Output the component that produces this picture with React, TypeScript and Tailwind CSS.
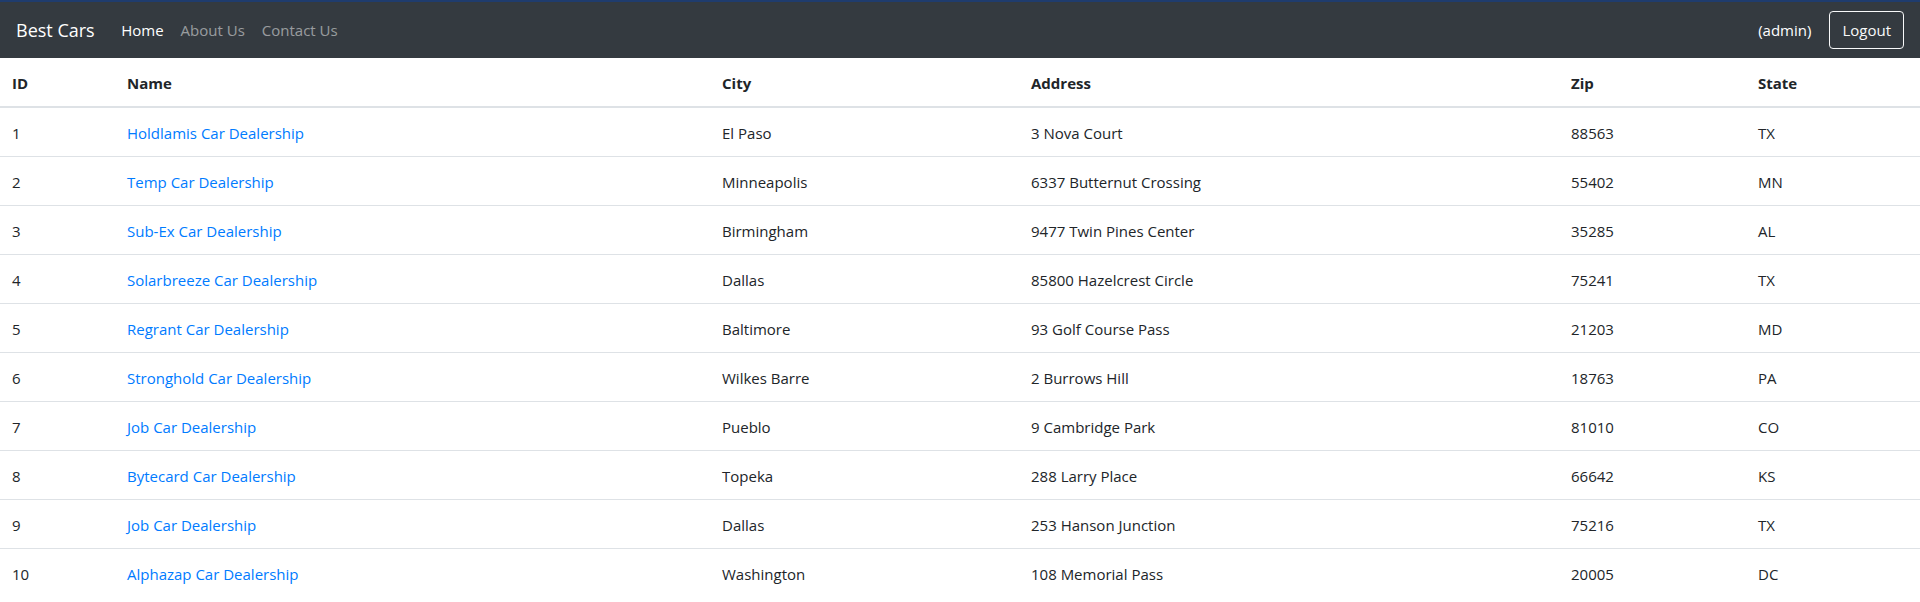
const DEALERS = [
  { id: 1, name: "Holdlamis Car Dealership", city: "El Paso", address: "3 Nova Court", zip: "88563", state: "TX" },
  { id: 2, name: "Temp Car Dealership", city: "Minneapolis", address: "6337 Butternut Crossing", zip: "55402", state: "MN" },
  { id: 3, name: "Sub-Ex Car Dealership", city: "Birmingham", address: "9477 Twin Pines Center", zip: "35285", state: "AL" },
  { id: 4, name: "Solarbreeze Car Dealership", city: "Dallas", address: "85800 Hazelcrest Circle", zip: "75241", state: "TX" },
  { id: 5, name: "Regrant Car Dealership", city: "Baltimore", address: "93 Golf Course Pass", zip: "21203", state: "MD" },
  { id: 6, name: "Stronghold Car Dealership", city: "Wilkes Barre", address: "2 Burrows Hill", zip: "18763", state: "PA" },
  { id: 7, name: "Job Car Dealership", city: "Pueblo", address: "9 Cambridge Park", zip: "81010", state: "CO" },
  { id: 8, name: "Bytecard Car Dealership", city: "Topeka", address: "288 Larry Place", zip: "66642", state: "KS" },
  { id: 9, name: "Job Car Dealership", city: "Dallas", address: "253 Hanson Junction", zip: "75216", state: "TX" },
  { id: 10, name: "Alphazap Car Dealership", city: "Washington", address: "108 Memorial Pass", zip: "20005", state: "DC" },
];

export default function App() {
  return (
    <div className="min-h-screen bg-white text-[#212529] font-['Open_Sans',sans-serif] text-[15px] leading-6">
      {/* Navbar */}
      <nav className="h-[58px] bg-[#343a40] border-t-2 border-[#1f3c6e] flex items-center justify-between px-4">
        <div className="flex items-center">
          <a href="#" className="text-[18px] text-white mr-[18px]">Best Cars</a>
          <a href="#" className="px-[8.5px] text-white">Home</a>
          <a href="#" className="px-[8.5px] text-[#ffffff80]">About Us</a>
          <a href="#" className="px-[8.5px] text-[#ffffff80]">Contact Us</a>
        </div>
        <div className="flex items-center">
          <span className="text-white mr-[18px]">(admin)</span>
          <button className="h-[38px] px-[12px] border border-[#f8f9fa] rounded text-[#f8f9fa]">Logout</button>
        </div>
      </nav>

      {/* Dealer table */}
      <table className="w-full border-collapse text-left">
        <thead>
          <tr className="border-b-2 border-[#dee2e6]">
            <th className="w-[115px] px-3 pt-[13px] pb-[11px] font-bold">ID</th>
            <th className="w-[595px] px-3 pt-[13px] pb-[11px] font-bold">Name</th>
            <th className="w-[309px] px-3 pt-[13px] pb-[11px] font-bold">City</th>
            <th className="w-[540px] px-3 pt-[13px] pb-[11px] font-bold">Address</th>
            <th className="w-[187px] px-3 pt-[13px] pb-[11px] font-bold">Zip</th>
            <th className="px-3 pt-[13px] pb-[11px] font-bold">State</th>
          </tr>
        </thead>
        <tbody>
          {DEALERS.map((d, i) => (
            <tr key={d.id} className={i > 0 ? "border-t border-[#dee2e6]" : ""}>
              <td className="px-3 pt-[13px] pb-[11px]">{d.id}</td>
              <td className="px-3 pt-[13px] pb-[11px]">
                <a href="#" className="text-[#007bff]">{d.name}</a>
              </td>
              <td className="px-3 pt-[13px] pb-[11px]">{d.city}</td>
              <td className="px-3 pt-[13px] pb-[11px]">{d.address}</td>
              <td className="px-3 pt-[13px] pb-[11px]">{d.zip}</td>
              <td className="px-3 pt-[13px] pb-[11px]">{d.state}</td>
            </tr>
          ))}
        </tbody>
      </table>
    </div>
  );
}
